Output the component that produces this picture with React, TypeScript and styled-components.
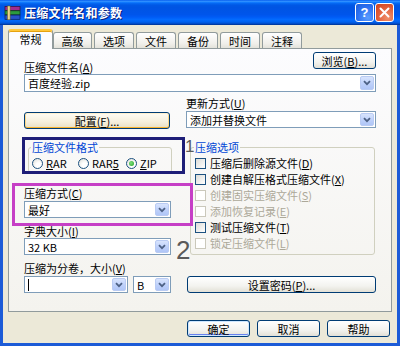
import React from 'react';
import styled, { createGlobalStyle, css } from 'styled-components';

const Global = createGlobalStyle`
  html, body { margin: 0; padding: 0; background: #ffffff; }
  body { font-family: "Noto Sans CJK SC", "Liberation Sans", sans-serif; font-size: 11px; color: #000; }
  * { box-sizing: border-box; }
`;

const Window = styled.div`
  width: 400px;
  height: 346px;
  display: flex;
  flex-direction: column;
  background: #1c5bd7;
  overflow: hidden;
`;

const TitleBar = styled.div`
  height: 25px;
  flex: none;
  display: flex;
  align-items: center;
  padding: 0 6px 0 4px;
  background: linear-gradient(to bottom, #0058ee 0%, #3593ff 5%, #127dff 9%, #0262ee 15%, #0057e5 22%, #0054e3 30%, #0055eb 58%, #005bf5 68%, #026afe 78%, #0062ef 87%, #0052d6 93%, #0040ab 97%, #003092 100%);
`;

const TitleText = styled.div`
  flex: 1;
  margin-left: 3px;
  color: #fff;
  font-weight: bold;
  font-size: 12px;
  letter-spacing: 0.3px;
  text-shadow: 1px 1px 0 #0a1e7a;
`;

const CaptionButton = styled.div<{ $kind: 'help' | 'close' }>`
  width: 19px;
  height: 19px;
  margin-left: 1px;
  border: 1px solid #fff;
  border-radius: 3px;
  display: flex;
  align-items: center;
  justify-content: center;
  color: #fff;
  font: bold 13px "Liberation Sans", sans-serif;
  ${(p) =>
    p.$kind === 'help'
      ? css`background: radial-gradient(circle at 70% 80%, #5a9cff 0%, #2a6ff0 60%, #1d5ed8 100%);`
      : css`background: radial-gradient(circle at 70% 80%, #f0906c 0%, #e05a35 60%, #c8401e 100%);`}
`;

const Body = styled.div`
  flex: 1;
  margin: 0 3px 3px;
  background: #ece9d8;
  padding: 4px 5px 0;
  display: flex;
  flex-direction: column;
`;

const TabRow = styled.div`
  height: 19px;
  display: flex;
  align-items: flex-end;
  position: relative;
  z-index: 1;
`;

const Tab = styled.div<{ $active?: boolean; $w: number; $ml: number }>`
  width: ${(p) => p.$w}px;
  margin-left: ${(p) => p.$ml}px;
  height: 16px;
  border: 1px solid #919b9c;
  border-bottom: none;
  border-radius: 3px 3px 0 0;
  background: linear-gradient(#ffffff, #f0efea 70%, #e3e2da);
  display: flex;
  align-items: center;
  justify-content: center;
  font-size: 11px;
  line-height: 12px;
  ${(p) =>
    p.$active &&
    css`
      height: 20px;
      margin-bottom: -1px;
      background: #fcfcfe;
      border-top: 2px solid #ffc83c;
      box-shadow: inset 0 1px 0 #e6a20f;
      padding-bottom: 2px;
    `}
`;

const Panel = styled.div`
  height: 264px;
  border: 1px solid #919b9c;
  background: linear-gradient(#fcfcfe, #f4f3ee);
  position: relative;
  padding: 3px 15px 0;
`;

const Header = styled.div`
  height: 22px;
  display: flex;
  justify-content: space-between;
`;

const Label = styled.div<{ $mt?: number }>`
  line-height: 14px;
  height: 14px;
  margin-top: ${(p) => p.$mt ?? 0}px;
  white-space: nowrap;
`;

const HeaderLabel = styled(Label)`
  align-self: flex-end;
`;

const XpButton = styled.div<{ $w: number; $mt?: number; $ml?: number; $hot?: boolean; $def?: boolean }>`
  width: ${(p) => p.$w}px;
  height: 17px;
  margin-top: ${(p) => p.$mt ?? 0}px;
  margin-left: ${(p) => p.$ml ?? 0}px;
  border: 1px solid #003c74;
  border-radius: 3px;
  background: linear-gradient(#ffffff, #f3f3ef 60%, #e2e0d6);
  display: flex;
  align-items: center;
  justify-content: center;
  font-size: 11px;
  line-height: 12px;
  white-space: nowrap;
  flex: none;
  ${(p) => p.$hot && css`box-shadow: inset 0 1px 0 #fff0cf, inset 0 -1px 0 #f8b330, inset 1px 0 0 #fdd889, inset -1px 0 0 #fdd889; background: linear-gradient(#fffdf5, #f6efdc 60%, #e9dfc4);`}
  ${(p) => p.$def && css`box-shadow: inset 0 0 0 1px #cee7ff, inset 0 -1px 0 1px #6982ee;`}
`;

const Combo = styled.div<{ $w?: number; $h?: number; $mt?: number }>`
  width: ${(p) => (p.$w ? `${p.$w}px` : '100%')};
  height: ${(p) => p.$h ?? 17}px;
  margin-top: ${(p) => p.$mt ?? 0}px;
  border: 1px solid #7f9db9;
  background: #fff;
  display: flex;
  align-items: stretch;
  flex: none;
`;

const ComboText = styled.div`
  flex: 1;
  padding-left: 3px;
  display: flex;
  align-items: center;
  font-size: 11px;
  white-space: nowrap;
  overflow: hidden;
`;

const Caret = styled.span`
  width: 1px;
  height: 12px;
  background: #000;
`;

const DropButton = styled.div`
  width: 14px;
  margin: 1px;
  border-radius: 2px;
  border: 1px solid #b9cbf3;
  background: linear-gradient(#d8e4fd, #bccffa 60%, #b0c6f7);
  display: flex;
  align-items: center;
  justify-content: center;
`;

const Columns = styled.div`
  display: grid;
  grid-template-columns: 147px 190px;
  column-gap: 15px;
`;

const Column = styled.div`
  display: flex;
  flex-direction: column;
  align-items: flex-start;
`;

const Group = styled.fieldset<{ $w: number; $mt: number; $pl: number; $pb: number }>`
  margin: ${(p) => p.$mt}px 0 0 4px;
  width: ${(p) => p.$w}px;
  padding: 2px 2px ${(p) => p.$pb}px ${(p) => p.$pl}px;
  border: 1px solid #d0d0bf;
  border-radius: 3px;
  min-width: 0;
`;

const Legend = styled.legend`
  padding: 0 1px;
  margin-left: -1px;
  color: #0046d5;
  line-height: 12px;
  font-size: 11px;
`;

const RadioRow = styled.div`
  display: flex;
  height: 16px;
  align-items: center;
`;

const RadioItem = styled.div<{ $w: number }>`
  width: ${(p) => p.$w}px;
  display: flex;
  align-items: center;
  gap: 3px;
  font-size: 11px;
`;

const RadioCircle = styled.span<{ $on?: boolean }>`
  width: 11px;
  height: 11px;
  border-radius: 50%;
  border: 1px solid #1c5180;
  background: radial-gradient(circle at 65% 70%, #ffffff 30%, #dcdcd6 100%);
  display: flex;
  align-items: center;
  justify-content: center;
  &::after {
    content: '';
    width: 5px;
    height: 5px;
    border-radius: 50%;
    background: ${(p) => (p.$on ? 'radial-gradient(circle at 40% 40%, #7ee07e, #21a121)' : 'transparent')};
  }
`;

const CheckRow = styled.div<{ $disabled?: boolean }>`
  height: 16px;
  display: flex;
  align-items: center;
  gap: 4px;
  white-space: nowrap;
  font-size: 11px;
  color: ${(p) => (p.$disabled ? '#aca899' : '#000')};
`;

const CheckBox = styled.span<{ $disabled?: boolean }>`
  width: 11px;
  height: 11px;
  flex: none;
  border: 1px solid ${(p) => (p.$disabled ? '#cac8bb' : '#1c5180')};
  background: ${(p) => (p.$disabled ? '#fff' : 'linear-gradient(135deg, #dcdcd7, #ffffff)')};
`;

const VolumeRow = styled.div`
  display: flex;
  gap: 5px;
  margin-top: 1px;
`;

const Footer = styled.div`
  display: flex;
  justify-content: flex-end;
  gap: 7px;
  padding: 8px 2px 0 0;
`;

const Mark = styled.div<{ $color: string; $x: number; $y: number; $w: number; $h: number }>`
  position: absolute;
  left: ${(p) => p.$x}px;
  top: ${(p) => p.$y}px;
  width: ${(p) => p.$w}px;
  height: ${(p) => p.$h}px;
  border: 3px solid ${(p) => p.$color};
  pointer-events: none;
`;

const Digit = styled.div<{ $x: number; $y: number; $size: number }>`
  position: absolute;
  left: ${(p) => p.$x}px;
  top: ${(p) => p.$y}px;
  font: ${(p) => p.$size}px/1 "Liberation Sans", sans-serif;
  color: #5a5a5a;
`;

const Arrow = () => (
  <svg width="8" height="6" viewBox="0 0 8 6">
    <path d="M1 1.2 L4 4.2 L7 1.2" fill="none" stroke="#4d6185" strokeWidth="1.8" />
  </svg>
);

const ComboBox: React.FC<{ text?: React.ReactNode; w?: number; h?: number; mt?: number }> = ({ text, w, h, mt }) => (
  <Combo $w={w} $h={h} $mt={mt}>
    <ComboText>{text}</ComboText>
    <DropButton>
      <Arrow />
    </DropButton>
  </Combo>
);

const RarIcon = () => (
  <svg width="17" height="16" viewBox="0 0 17 16">
    <rect x="1" y="1.5" width="15" height="4" fill="#a22c8e" stroke="#3b0f36" strokeWidth="0.7" />
    <rect x="1" y="5.8" width="15" height="4" fill="#2d9b3d" stroke="#0d3a14" strokeWidth="0.7" />
    <rect x="1" y="10.1" width="15" height="4.2" fill="#2752c8" stroke="#0c1f5a" strokeWidth="0.7" />
    <rect x="3.5" y="1" width="2.6" height="13.8" fill="#e9d48a" stroke="#6b5a1f" strokeWidth="0.5" />
  </svg>
);

const CloseGlyph = () => (
  <svg width="11" height="11" viewBox="0 0 11 11">
    <path d="M1.5 1.5 L9.5 9.5 M9.5 1.5 L1.5 9.5" stroke="#fff" strokeWidth="2" strokeLinecap="round" />
  </svg>
);

const K: React.FC<{ k: string }> = ({ k }) => (
  <>
    (<u>{k}</u>)
  </>
);

const tabs = [
  { t: '常规', w: 45, ml: 0, active: true },
  { t: '高级', w: 39, ml: 0 },
  { t: '选项', w: 40, ml: 2 },
  { t: '文件', w: 40, ml: 2 },
  { t: '备份', w: 40, ml: 2 },
  { t: '时间', w: 40, ml: 2 },
  { t: '注释', w: 40, ml: 2 },
];

const options: { label: string; k: string; disabled?: boolean }[] = [
  { label: '压缩后删除源文件', k: 'D' },
  { label: '创建自解压格式压缩文件', k: 'X' },
  { label: '创建固实压缩文件', k: 'S', disabled: true },
  { label: '添加恢复记录', k: 'E', disabled: true },
  { label: '测试压缩文件', k: 'T' },
  { label: '锁定压缩文件', k: 'L', disabled: true },
];

export default function App() {
  return (
    <>
      <Global />
      <Window>
        <TitleBar>
          <RarIcon />
          <TitleText>压缩文件名和参数</TitleText>
          <CaptionButton $kind="help">?</CaptionButton>
          <CaptionButton $kind="close">
            <CloseGlyph />
          </CaptionButton>
        </TitleBar>
        <Body>
          <TabRow>
            {tabs.map((t) => (
              <Tab key={t.t} $active={t.active} $w={t.w} $ml={t.ml}>
                {t.t}
              </Tab>
            ))}
          </TabRow>
          <Panel>
            <Header>
              <HeaderLabel>
                压缩文件名<K k="A" />
              </HeaderLabel>
              <XpButton $w={63}>
                浏览<K k="B" />...
              </XpButton>
            </Header>
            <ComboBox text="百度经验.zip" h={18} />
            <Columns>
              <Column>
                <XpButton $w={146} $mt={20} $hot>
                  配置<K k="F" />...
                </XpButton>
                <Group $w={144} $mt={12} $pl={3} $pb={1}>
                  <Legend>压缩文件格式</Legend>
                  <RadioRow>
                    <RadioItem $w={46}>
                      <RadioCircle />
                      <span>
                        <u>R</u>AR
                      </span>
                    </RadioItem>
                    <RadioItem $w={48}>
                      <RadioCircle />
                      <span>
                        RAR<u>5</u>
                      </span>
                    </RadioItem>
                    <RadioItem $w={40}>
                      <RadioCircle $on />
                      <span>
                        <u>Z</u>IP
                      </span>
                    </RadioItem>
                  </RadioRow>
                </Group>
                <Label $mt={13}>
                  压缩方式<K k="C" />
                </Label>
                <ComboBox text="最好" mt={1} />
                <Label $mt={6}>
                  字典大小<K k="I" />
                </Label>
                <ComboBox text="32 KB" />
                <Label $mt={6}>
                  压缩为分卷，大小<K k="V" />
                </Label>
                <VolumeRow>
                  <ComboBox text={<Caret />} w={104} />
                  <ComboBox text="B" w={38} />
                </VolumeRow>
              </Column>
              <Column>
                <Label $mt={4}>
                  更新方式<K k="U" />
                </Label>
                <ComboBox text="添加并替换文件" mt={1} />
                <Group $w={185} $mt={13} $pl={4} $pb={3}>
                  <Legend>压缩选项</Legend>
                  {options.map((o) => (
                    <CheckRow key={o.k} $disabled={o.disabled}>
                      <CheckBox $disabled={o.disabled} />
                      <span>
                        {o.label}
                        <K k={o.k} />
                      </span>
                    </CheckRow>
                  ))}
                </Group>
                <XpButton $w={189} $mt={21} $ml={1}>
                  设置密码<K k="P" />...
                </XpButton>
              </Column>
            </Columns>
            <Mark $color="#1e1e78" $x={13} $y={88} $w={163} $h={37} />
            <Mark $color="#c63fc6" $x={3} $y={134} $w={181} $h={43} />
            <Digit $x={176} $y={89} $size={17}>
              1
            </Digit>
            <Digit $x={167} $y={188} $size={26}>
              2
            </Digit>
          </Panel>
          <Footer>
            <XpButton $w={63} $def>
              确定
            </XpButton>
            <XpButton $w={63}>取消</XpButton>
            <XpButton $w={63}>帮助</XpButton>
          </Footer>
        </Body>
      </Window>
    </>
  );
}
